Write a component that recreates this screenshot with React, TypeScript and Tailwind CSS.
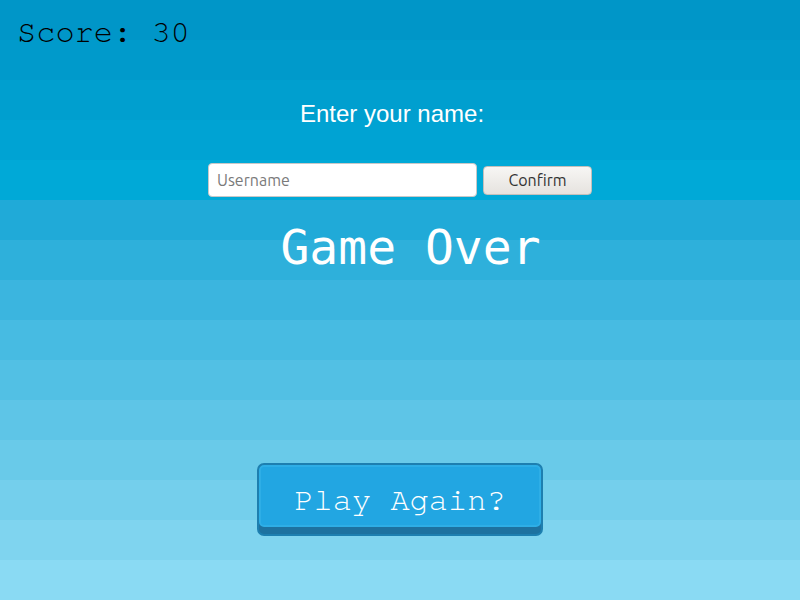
const bands = [
  "bg-[#0096c8]",
  "bg-[#009acb]",
  "bg-[#009fcf]",
  "bg-[#00a3d3]",
  "bg-[#00a9d7]",
  "bg-[#20aad8]",
  "bg-[#2eb0db]",
  "bg-[#3bb5df]",
  "bg-[#47bbe2]",
  "bg-[#52c0e4]",
  "bg-[#5ec5e7]",
  "bg-[#69cae9]",
  "bg-[#74cfec]",
  "bg-[#7fd4ef]",
  "bg-[#8adaf3]",
];

const courier =
  "font-['Nimbus_Mono_PS','Nimbus_Mono','Courier_10_Pitch','TeX_Gyre_Cursor',FreeMono,'Courier_New',monospace]";

export default function App() {
  return (
    <div className="relative w-[800px] h-[600px] overflow-hidden">
      {/* striped sky behind the game */}
      <div className="absolute inset-0 flex flex-col">
        {bands.map((b, i) => (
          <div key={i} className={`h-[40px] ${b}`} />
        ))}
      </div>

      <div className="relative flex flex-col h-full">
        <div className={`pl-[17px] pt-[13px] text-[32px] leading-[36px] text-black ${courier}`}>
          Score: 30
        </div>

        <div className="mt-[51px] mr-[16px] text-center text-white text-[24px] leading-[28px] font-['Liberation_Sans',Arial,sans-serif]">
          Enter your name:
        </div>

        <div className="mt-[35px] flex justify-center items-center gap-[6px]">
          <input
            placeholder="Username"
            className="w-[269px] h-[34px] px-[8px] rounded-[4px] bg-white border border-[#c8c8c8] text-[16px] text-[#333] placeholder:text-[#7a7a7a] outline-none font-['Ubuntu','Open_Sans','Noto_Sans',sans-serif]"
          />
          <button className="w-[109px] h-[29px] rounded-[4px] border border-[#c4c0bb] bg-gradient-to-b from-[#f7f6f4] to-[#e6e3df] text-[16px] text-[#333] font-['Ubuntu','Open_Sans','Noto_Sans',sans-serif]">
            Confirm
          </button>
        </div>

        <div className="mt-[22px] ml-[21px] text-center text-white text-[48px] leading-[56px] font-['DejaVu_Sans_Mono',monospace]">
          Game Over
        </div>

        <div className="flex-1" />

        <div className="mb-[64px] flex justify-center">
          <button className="w-[286px] h-[73px] rounded-[7px] border-2 border-[#1d7fb0] bg-[#1d72a0] pb-[7px]">
            <div className={`h-full rounded-[5px] border-2 border-[#2eaee6] bg-[#22a6e2] pt-[5px] flex items-center justify-center text-white text-[32px] ${courier}`}>
              Play Again?
            </div>
          </button>
        </div>
      </div>
    </div>
  );
}
